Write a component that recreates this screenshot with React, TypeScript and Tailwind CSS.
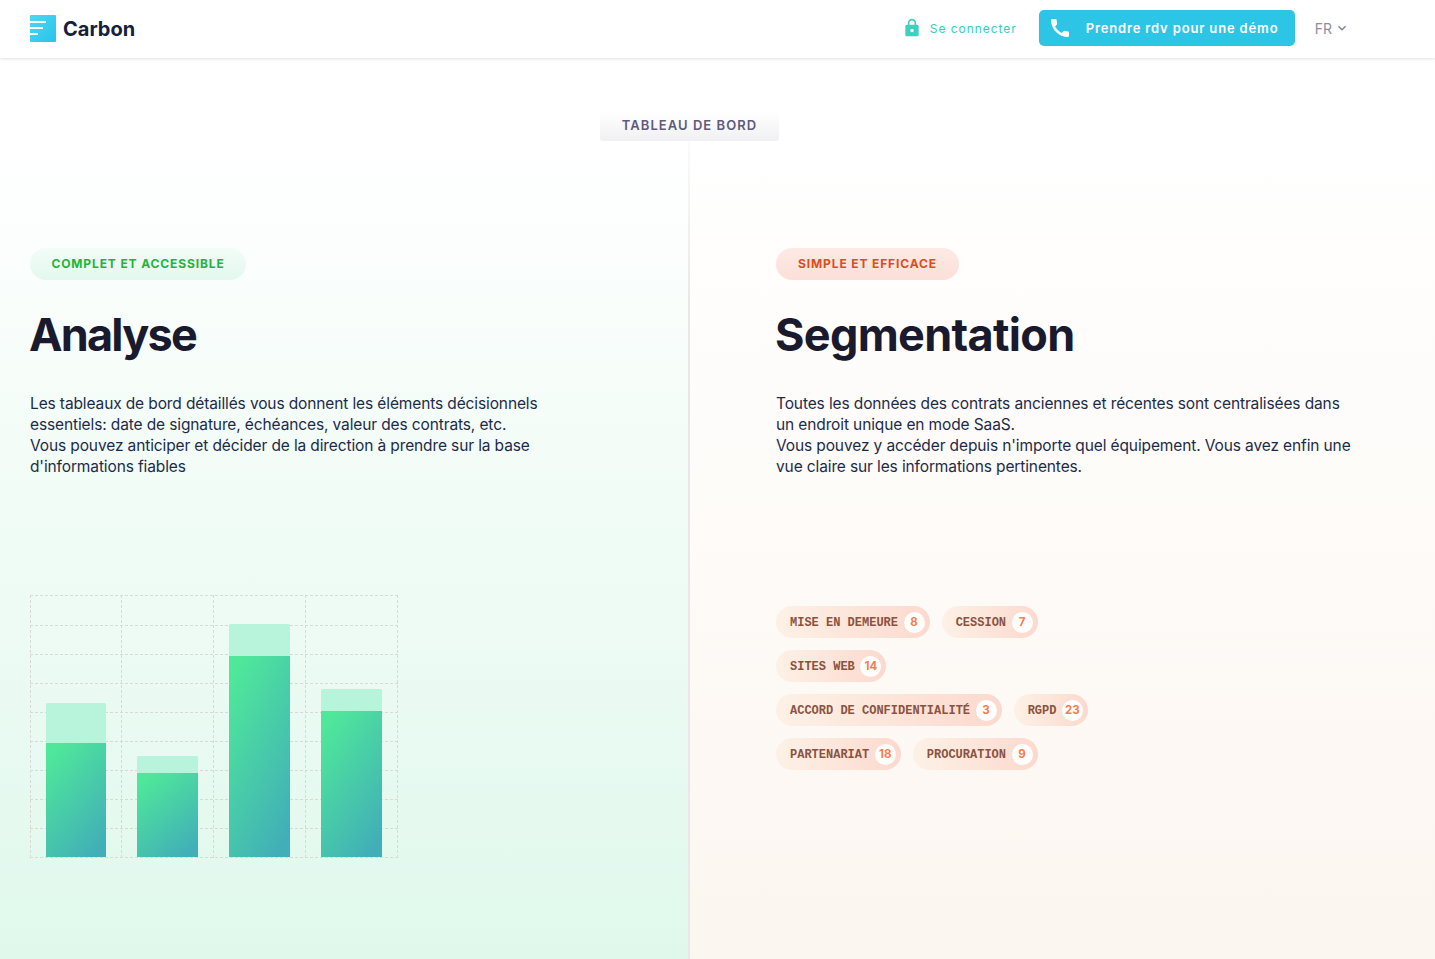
import React from 'react';
import { MdLock, MdCall, MdKeyboardArrowDown } from 'react-icons/md';

const bars = [
  { x: 46, w: 60, top: 703, mid: 743 },
  { x: 137, w: 61, top: 756, mid: 773 },
  { x: 229, w: 61, top: 624, mid: 656 },
  { x: 321, w: 61, top: 689, mid: 711 },
];

const rows = [595.5, 625.5, 654.5, 683.5, 712.5, 741.5, 770.5, 799.5, 828.5, 857.5];
const cols = [30.5, 121.5, 213.5, 305.5, 397.5];

const tagRows = [
  [{ label: 'MISE EN DEMEURE', n: 8 }, { label: 'CESSION', n: 7 }],
  [{ label: 'SITES WEB', n: 14 }],
  [{ label: 'ACCORD DE CONFIDENTIALITÉ', n: 3 }, { label: 'RGPD', n: 23 }],
  [{ label: 'PARTENARIAT', n: 18 }, { label: 'PROCURATION', n: 9 }],
];

const Logo = () => (
  <svg width="26" height="27" viewBox="0 0 26 27">
    <defs>
      <linearGradient id="logo" x1="0" y1="0" x2="1" y2="1">
        <stop offset="0" stopColor="#4fd6f2" />
        <stop offset="1" stopColor="#27c4ea" />
      </linearGradient>
    </defs>
    <rect width="26" height="27" rx="1" fill="url(#logo)" />
    <rect x="0" y="6" width="16" height="2" fill="#fff" />
    <rect x="0" y="12" width="13" height="2" fill="#fff" />
    <rect x="0" y="18" width="8" height="2" fill="#fff" />
  </svg>
);

const Chart = () => (
  <svg width="368" height="263" viewBox="30 595 368 263" className="block">
    <defs>
      <linearGradient id="bar" x1="0.2" y1="0" x2="0.8" y2="1">
        <stop offset="0" stopColor="#4fe89a" />
        <stop offset="1" stopColor="#41aeb8" />
      </linearGradient>
    </defs>
    {rows.map((y) => (
      <line key={y} x1="30" x2="398" y1={y} y2={y} stroke="#dcd8d8" strokeDasharray="3 2" />
    ))}
    {cols.map((x) => (
      <line key={x} x1={x} x2={x} y1="595" y2="858" stroke="#dcd8d8" strokeDasharray="3 2" />
    ))}
    {bars.map((b) => (
      <g key={b.x}>
        <rect x={b.x} y={b.top} width={b.w} height={b.mid - b.top + 2} rx="1.5" fill="#b8f4db" />
        <rect x={b.x} y={b.mid} width={b.w} height={857 - b.mid} fill="url(#bar)" />
      </g>
    ))}
  </svg>
);

const Tag = ({ label, n }: { label: string; n: number }) => (
  <div className="flex h-8 items-center rounded-full bg-gradient-to-r from-[#fdf1e6] to-[#fcd9ce] pl-[14px] pr-[5.1px] font-['Liberation_Mono',monospace] text-xs font-bold text-[#8a5340]">
    <span className="whitespace-nowrap pt-[1px]">{label}</span>
    <span className="ml-[5.5px] flex h-[21px] w-[21px] items-center justify-center rounded-full bg-white pt-[1px] font-['Inter',sans-serif] text-[11.5px] font-bold text-[#fb7c4d]">
      {n}
    </span>
  </div>
);

export default function App() {
  return (
    <div className="flex h-[959px] w-[1435px] flex-col overflow-hidden bg-white font-['Inter',sans-serif]">
      <header className="relative z-10 flex h-[58px] shrink-0 items-center justify-between bg-white pb-[2px] pl-[30px] pr-[85px] shadow-[0_1px_3px_rgba(0,0,0,0.12)]">
        <div className="mt-[1px] flex items-center gap-[7px]">
          <Logo />
          <span className="text-xl font-bold text-[#14213d]">Carbon</span>
        </div>
        <div className="flex items-center">
          <MdLock className="text-[20px] text-[#3fd0c0]" />
          <span className="ml-[8px] pt-[2px] text-xs tracking-[0.08em] text-[#36cdbd]">Se connecter</span>
          <button className="ml-[22px] flex h-9 w-[256px] items-center rounded-[5px] bg-[#2cc5e6] pl-[9px] text-[13px] font-semibold tracking-[0.065em] text-white">
            <MdCall className="text-[24px]" />
            <span className="ml-[14px] whitespace-nowrap pt-[2px]">Prendre rdv pour une démo</span>
          </button>
          <span className="ml-[20px] pt-[2px] text-sm text-[#8b919c]">FR</span>
          <MdKeyboardArrowDown className="ml-[2px] text-[16px] text-[#7d8590]" />
        </div>
      </header>

      <div className="flex h-[83px] shrink-0 items-end justify-center pr-[56px]">
        <div className="flex h-[29px] w-[179px] items-center justify-center rounded-b-[3px] bg-gradient-to-b from-white to-[#f0f0f2] pb-[2px] text-[13px] font-semibold tracking-[0.08em] text-[#5e5a7a]">
          TABLEAU DE BORD
        </div>
      </div>

      <div className="flex min-h-0 flex-1">
        <section className="w-[688px] shrink-0 bg-gradient-to-b from-white to-[#e0f8ec] pl-[30px] pt-[107px]">
          <div className="flex h-8 w-[216px] items-center justify-center rounded-full bg-gradient-to-b from-[#f3fcf8] to-[#e3f8ef] text-xs font-bold tracking-[0.073em] text-[#1fb53a]">
            COMPLET ET ACCESSIBLE
          </div>
          <h2 className="-ml-px mt-[27px] text-[45px] font-bold leading-[56px] tracking-[-0.04em] text-[#1a1a2e]">Analyse</h2>
          <p className="mt-[30px] whitespace-nowrap text-[15.5px] leading-[21px] tracking-[-0.12px] text-[#1c2b4a]">
            Les tableaux de bord détaillés vous donnent les éléments décisionnels<br />
            essentiels: date de signature, échéances, valeur des contrats, etc.<br />
            Vous pouvez anticiper et décider de la direction à prendre sur la base<br />
            d'informations fiables
          </p>
          <div className="mt-[118px]">
            <Chart />
          </div>
        </section>

        <div className="w-[2px] shrink-0 bg-gradient-to-b from-[#fafafa] via-[#e8e8e8] via-[20%] to-[#ece6e8]" />

        <section className="flex-1 bg-gradient-to-b from-white to-[#fcf6f0] pl-[86px] pt-[107px]">
          <div className="flex h-8 w-[183px] items-center justify-center rounded-full bg-gradient-to-b from-[#fdeae5] to-[#fcdfd8] text-xs font-bold tracking-[0.073em] text-[#dc4e1e]">
            SIMPLE ET EFFICACE
          </div>
          <h2 className="-ml-px mt-[27px] text-[45px] font-bold leading-[56px] tracking-[-0.015em] text-[#1a1a2e]">Segmentation</h2>
          <p className="mt-[30px] whitespace-nowrap text-[15.5px] leading-[21px] tracking-[-0.12px] text-[#1c2b4a]">
            Toutes les données des contrats anciennes et récentes sont centralisées dans<br />
            un endroit unique en mode SaaS.<br />
            Vous pouvez y accéder depuis n'importe quel équipement. Vous avez enfin une<br />
            vue claire sur les informations pertinentes.
          </p>
          <div className="mt-[129px] flex flex-col gap-3">
            {tagRows.map((row, i) => (
              <div key={i} className="flex gap-3">
                {row.map((t) => (
                  <Tag key={t.label} label={t.label} n={t.n} />
                ))}
              </div>
            ))}
          </div>
        </section>
      </div>
    </div>
  );
}
